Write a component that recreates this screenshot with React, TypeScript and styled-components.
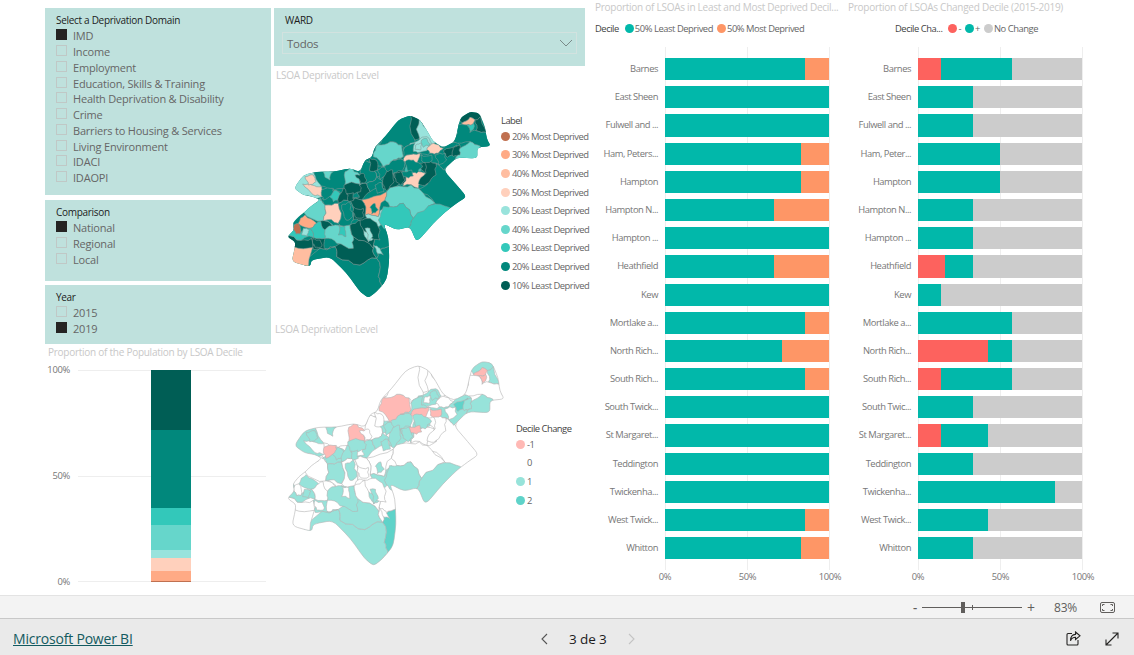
import React from "react";
import styled, { createGlobalStyle } from "styled-components";

const Global = createGlobalStyle`
  html, body { margin: 0; padding: 0; background: #fff; }
  body { font-family: "Open Sans", "Noto Sans", "Liberation Sans", sans-serif; }
`;

const Page = styled.div`
  width: 1134px; height: 655px; overflow: hidden; display: flex; flex-direction: column; background: #fff;
`;
const Canvas = styled.div`
  height: 595px; flex: none; display: grid; grid-template-columns: 226px 314px 263px 270px;
  padding: 8px 0 0 45px; box-sizing: border-box;
`;
const Column = styled.div<{ $ml?: number; $mt?: number }>`
  display: flex; flex-direction: column; min-width: 0; margin-left: ${p => p.$ml ?? 0}px; margin-top: ${p => p.$mt ?? 0}px;
`;
const Panel = styled.section<{ $h: number; $mb?: number }>`
  background: #bfe1dd; height: ${p => p.$h}px; margin-bottom: ${p => p.$mb ?? 0}px;
  padding: 6px 0 0 11px; box-sizing: border-box; flex: none;
`;
const SlicerTitle = styled.div`
  font-size: 10px; line-height: 12px; color: #1c1c1c; letter-spacing: -0.3px; margin-bottom: 2px; white-space: nowrap;
`;
const Option = styled.div`
  height: 15.75px; display: flex; align-items: center; gap: 6px; font-size: 11px; color: #666; letter-spacing: -0.2px; white-space: nowrap;
`;
const Check = styled.span<{ $on?: boolean }>`
  width: 11px; height: 11px; box-sizing: border-box; flex: none; margin-top: -2px;
  background: ${p => (p.$on ? "#252423" : "transparent")};
  border: 1px solid ${p => (p.$on ? "#252423" : "#c0c8c6")};
`;
const Title = styled.div<{ $ml?: number }>`
  font-size: 10px; line-height: 12px; color: #c8c8c8; white-space: nowrap;
  margin-left: ${p => p.$ml ?? 0}px;
  letter-spacing: -0.26px; flex: none;
`;
const WardTitle = styled(SlicerTitle)`margin: 0 0 6px;`;
const Dropdown = styled.div`
  width: 295px; height: 22px; margin-left: -3px; box-sizing: border-box; border: 1px solid #d2e2df;
  display: flex; align-items: center; justify-content: space-between; padding: 0 3px 0 4px;
  font-size: 11.5px; color: #666; letter-spacing: -0.3px;
`;
const MapRow = styled.div<{ $h: number }>`
  height: ${p => p.$h}px; display: flex; flex: none;
`;
const MapSvg = styled.svg`
  flex: none; display: block;
`;
const MapLegend = styled.div<{ $ml: number; $mt: number; $pitch: number }>`
  margin: ${p => p.$mt}px 0 0 ${p => p.$ml}px;
  display: flex; flex-direction: column; font-size: 9.4px; color: #666; white-space: nowrap; letter-spacing: -0.5px;
  & > div { height: ${p => p.$pitch}px; flex: none; }
  & > div:first-child { height: 14px; }
`;
const LegendHead = styled.div`
  display: flex; align-items: center; color: #444;
`;
const LegendItem = styled.div`
  display: flex; align-items: center; gap: 2px;
`;
const Dot = styled.span<{ $c: string; $s?: number }>`
  width: ${p => p.$s ?? 9}px; height: ${p => p.$s ?? 9}px; border-radius: 50%; background: ${p => p.$c}; flex: none;
`;
const StackTitle = styled(Title)`margin: 2px 0 0 3px;`;
const StackChart = styled.div`
  display: flex; margin-top: 12px; height: 228px;
`;
const YAxis = styled.div`
  width: 25px; height: 224px; margin-top: -6px; display: flex; flex-direction: column; justify-content: space-between; align-items: flex-end;
  font-size: 9.4px; line-height: 12px; color: #777; letter-spacing: -0.3px;
`;
const StackPlot = styled.div`
  width: 188px; height: 212px; margin-left: 8px; box-sizing: border-box; padding-right: 2px; display: flex; justify-content: center; align-items: stretch;
  background-image: linear-gradient(#eee, #eee), linear-gradient(#eee, #eee), linear-gradient(#eee, #eee);
  background-size: 100% 1px; background-repeat: no-repeat; background-position: 0 0, 0 50%, 0 100%;
`;
const Stack = styled.div`
  width: 40px; display: flex; flex-direction: column;
`;
const StackSeg = styled.div<{ $c: string }>`background: ${p => p.$c};`;

const ChartHeader = styled.div<{ $ml?: number }>`
  display: flex; align-items: center; height: 14px; margin: 8px 0 0 ${p => p.$ml ?? 0}px; font-size: 9.4px; color: #666; white-space: nowrap; letter-spacing: -0.45px; flex: none;
`;
const LegendName = styled.span`
  color: #444; margin-right: 6px;
`;
const LegendEntry = styled.span`
  display: flex; align-items: center; gap: 1px; margin-right: 4px;
`;
const BarArea = styled.div`
  display: flex; flex-direction: column; margin-top: 12px;
`;
const Rows = styled.div`
  display: flex; flex-direction: column;
`;
const Row = styled.div<{ $edge: boolean }>`
  display: flex; height: ${p => (p.$edge ? 36.2 : 28.2)}px; align-items: stretch; flex: none;
`;
const Cat = styled.div<{ $first: boolean }>`
  width: 70px; padding-right: 7px; padding-top: ${p => (p.$first ? 8 : 0)}px; box-sizing: border-box; text-align: right; font-size: 9.4px; color: #777; line-height: 28px; white-space: nowrap; flex: none; letter-spacing: -0.45px;
`;
const Plot = styled.div<{ $first?: boolean; $last?: boolean }>`
  width: 165px; box-sizing: border-box; display: flex; align-items: stretch; flex: none;
  padding: ${p => (p.$first ? "11px" : "3px")} 1px ${p => (p.$last ? "11px" : "3px")} 0;
  background-image: linear-gradient(#eee, #eee), linear-gradient(#eee, #eee), linear-gradient(#eee, #eee);
  background-size: 1px 100%; background-repeat: no-repeat; background-position: 0 0, 50% 0, 100% 0;
`;
const BarSeg = styled.div<{ $c: string }>`background: ${p => p.$c}; height: 100%;`;
const XAxis = styled.div`
  width: 205px; margin: 1px 0 0 50px; display: flex; justify-content: space-between; font-size: 9.4px; color: #777; line-height: 12px; letter-spacing: -0.3px;
  & > span { width: 40px; text-align: center; }
`;

const ZoomBar = styled.div`
  height: 22px; background: #f3f3f3; border-top: 1px solid #e3e3e3; border-bottom: 1px solid #c8c8c8;
  display: flex; align-items: center; font-size: 12px; color: #605e5c; flex: none;
`;
const ZoomMinus = styled.span`margin-left: 913px; width: 9px; font-size: 13px; line-height: 20px; font-weight: 600;`;
const Slider = styled.div`
  width: 100px; height: 1px; background: #605e5c; position: relative;
`;
const Thumb = styled.span`
  position: absolute; left: 39px; top: -5px; width: 4px; height: 11px; background: #605e5c;
`;
const Tick = styled.span`
  position: absolute; left: 50px; top: -2px; width: 1px; height: 5px; background: #605e5c;
`;
const ZoomPlus = styled.span`margin-left: 5px; font-size: 14px; width: 12px;`;
const ZoomVal = styled.span`margin-left: 15px; width: 26px; font-size: 12px; letter-spacing: -0.2px;`;
const FitBtn = styled.svg`margin-left: 20px;`;
const BottomBar = styled.div`
  flex: 1; background: #eaeaea; display: flex; align-items: center; padding-top: 3px; box-sizing: border-box;
`;
const PbiLink = styled.a`
  margin-left: 13px; font-size: 14px; color: #135a60; text-decoration: underline; width: 527px; letter-spacing: -0.2px; white-space: nowrap; flex: none;
`;
const Pager = styled.div`
  display: flex; align-items: center; width: 110px; font-size: 13.5px; color: #1c1c1c; letter-spacing: -0.1px; flex: none;
`;
const PagerText = styled.span`margin: 0 20px; white-space: nowrap;`;
const BarIcons = styled.div`
  margin-left: 416px; display: flex; align-items: center; gap: 24px;
`;

const C: Record<string, string> = {
  a: "#005e55", b: "#01887c", c: "#33c8ba", d: "#66d6cb", e: "#99e3dc",
  f: "#ffd0bc", g: "#ffbda0", h: "#ffaa85", i: "#c07050",
  p: "#ffb9b5", w: "#ffffff", t: "#97e3da", u: "#5fd3c9",
};

const outline = "52,530 72,510 68,490 85,470 105,455 120,440 150,420 130,410 100,405 72,385 100,345 140,335 190,335 240,325 270,335 285,300 305,292 315,260 345,230 385,180 420,166 450,180 470,210 490,245 520,262 555,245 570,175 600,155 628,160 645,200 650,235 662,258 622,262 622,296 560,292 520,330 560,375 590,410 560,430 530,452 490,490 440,548 420,500 380,510 340,490 355,530 358,600 350,660 320,695 295,714 270,695 230,640 180,590 125,600 120,620 65,605 75,560 75,545";

type Pt = [number, number];
const parse = (s: string): Pt[] => s.split(" ").map(p => p.split(",").map(Number) as Pt);
const lerp = (a: Pt, b: Pt, t: number): string => `${(a[0] + (b[0] - a[0]) * t).toFixed(1)} ${(a[1] + (b[1] - a[1]) * t).toFixed(1)}`;
const rounded = (s: string): string => {
  const pts = parse(s);
  const n = pts.length;
  let d = `M${lerp(pts[n - 1], pts[0], 0.7)}`;
  for (let i = 0; i < n; i++) {
    const a = pts[i];
    const b = pts[(i + 1) % n];
    d += ` Q${a[0]} ${a[1]} ${lerp(a, b, 0.3)} L${lerp(a, b, 0.7)}`;
  }
  return d + "Z";
};
const rnd = (a: number, b: number) => {
  const s = Math.sin(a * 12.9898 + b * 78.233) * 43758.5453;
  return s - Math.floor(s);
};
const subdivide = (a: Pt, b: Pt, depth: number): Pt[] => {
  const len = Math.hypot(b[0] - a[0], b[1] - a[1]);
  if (depth === 0 || len < 9) return [];
  const k = (rnd(a[0] + b[0], a[1] + b[1]) - 0.5) * 0.36;
  const m: Pt = [(a[0] + b[0]) / 2 - ((b[1] - a[1]) * k), (a[1] + b[1]) / 2 + ((b[0] - a[0]) * k)];
  return [...subdivide(a, m, depth - 1), m, ...subdivide(m, b, depth - 1)];
};
const jag = (s: string): string => {
  const pts = parse(s);
  const out: Pt[] = [];
  pts.forEach((a, i) => {
    const b = pts[(i + 1) % pts.length];
    const swap = a[0] > b[0] || (a[0] === b[0] && a[1] > b[1]);
    const mid = swap ? subdivide(b, a, 2).reverse() : subdivide(a, b, 2);
    out.push(a, ...mid);
  });
  return out.map(p => `${p[0].toFixed(1)},${p[1].toFixed(1)}`).join(" ");
};

type Reg = [string, string, string];
const regions: Reg[] = [
  ["100,640 150,565 195,560 200,590 270,615 320,595 325,650 335,680 300,730 250,690 180,600", "b", "t"],
  ["320,595 335,565 370,560 370,640 350,700 335,680 325,650", "b", "u"],
  ["195,560 250,530 310,565 320,595 270,615 200,590", "a", "t"],
  ["310,500 335,480 370,530 370,560 335,565 320,595 310,565 325,520", "b", "w"],
  ["50,620 70,560 128,562 120,635", "g", "w"],
  ["35,525 80,540 125,535 130,562 70,560", "a", "w"],
  ["125,535 165,535 168,570 195,560 150,565 130,568", "a", "t"],
  ["72,495 85,490 90,522 78,522", "i", "w"],
  ["85,490 105,465 140,490 120,505", "h", "t"],
  ["55,480 72,495 78,522 90,522 120,505 130,532 80,540 35,525", "c", "t"],
  ["140,490 165,480 190,500 165,515 165,535 130,532 120,505", "c", "w"],
  ["148,478 180,488 190,503 165,510", "a", "w"],
  ["165,510 195,495 240,495 250,530 250,565 200,550 165,535", "d", "t"],
  ["205,495 225,500 228,530 205,525", "c", "w"],
  ["240,495 270,480 310,500 325,520 310,565 250,530", "a", "w"],
  ["282,505 308,510 312,535 295,545 285,530", "e", "t"],
  ["310,555 330,565 340,585 322,580", "e", "w"],
  ["150,415 100,455 160,482 165,435", "d", "w"],
  ["165,435 205,430 205,490 160,482", "f", "t"],
  ["205,430 240,420 250,480 240,495 205,490", "b", "w"],
  ["150,420 195,390 220,400 205,430 165,435", "b", "t"],
  ["170,400 195,390 215,415 190,425", "c", "t"],
  ["60,385 100,335 130,335 150,370 155,410 130,415 95,410", "e", "t"],
  ["98,372 125,375 155,380 155,410 130,405", "f", "w"],
  ["105,350 130,345 138,365 115,375", "f", "t"],
  ["130,335 240,320 250,360 220,385 195,390 155,378", "b", "w"],
  ["160,335 190,335 180,360 165,352", "d", "t"],
  ["225,335 240,320 270,345 270,375 225,375", "d", "p"],
  ["155,390 190,385 185,405 160,420", "b", "p"],
  ["220,385 270,375 290,370 300,395 275,420 240,420 205,430", "a", "t"],
  ["240,395 262,390 268,412 245,415", "b", "w"],
  ["270,345 285,295 310,310 320,350 290,370 270,375", "b", "w"],
  ["290,370 320,350 345,370 300,395", "b", "t"],
  ["310,310 340,320 370,300 400,300 400,340 370,345 345,350 320,350", "b", "t"],
  ["345,350 370,340 395,370 370,392 338,385", "a", "t"],
  ["370,340 400,335 410,345 400,378 395,370", "a", "t"],
  ["275,420 350,395 345,420 325,470 285,465", "h", "w"],
  ["300,442 315,430 325,450 305,462", "b", "t"],
  ["325,470 345,440 340,490 310,500 285,465", "e", "t"],
  ["240,420 275,420 285,465 310,500 270,480 250,480", "a", "w"],
  ["410,345 445,335 465,338 465,355 445,385 400,378", "f", "w"],
  ["445,385 470,375 500,310 520,325 610,410 530,460 495,430 440,390", "b", "w"],
  ["345,420 350,395 400,380 445,385 495,430 430,475 400,430 360,440", "d", "w"],
  ["340,440 360,440 400,430 430,475 410,510 370,520 335,495 325,480", "c", "t"],
  ["430,475 495,432 550,452 440,570 410,510", "c", "t"],
  ["400,300 410,285 450,280 440,310 410,310", "f", "p"],
  ["410,310 440,310 455,330 430,338 410,345", "c", "t"],
  ["440,310 470,300 500,310 470,375 465,338 455,330", "a", "w"],
  ["280,300 310,255 325,255 345,320 310,310", "b", "w"],
  ["310,290 325,252 360,245 395,255 400,290 370,300 340,320", "d", "p"],
  ["380,170 420,155 435,250 400,270 395,255 360,245 325,255 340,220", "b", "w"],
  ["420,155 458,170 450,235 435,240", "a", "w"],
  ["448,175 480,215 500,245 470,268 450,240", "e", "w"],
  ["420,250 470,230 485,250 470,272 430,275", "e", "t"],
  ["400,270 435,250 430,275 450,280 410,285 400,300 370,300 400,290", "b", "t"],
  ["470,268 490,250 520,265 505,280 480,280", "f", "w"],
  ["450,280 480,280 505,280 520,265 560,245 570,265 560,290 520,330 500,310 470,300", "b", "t"],
  ["560,175 600,145 635,150 635,170 615,180 600,172 575,190", "a", "t"],
  ["575,190 600,172 615,180 610,190 590,195", "g", "p"],
  ["590,195 610,190 610,208 600,218", "c", "p"],
  ["615,180 635,160 650,218 618,212", "a", "t"],
  ["560,190 590,195 600,218 618,212 650,218 675,265 620,262 600,245 550,245", "b", "w"],
  ["555,300 570,265 600,245 630,258 630,305", "d", "t"],
  ["520,272 560,255 556,288 532,292", "a", "u"],
  ["222,375 268,372 272,395 232,405", "a", "t"],
  ["296,290 318,300 322,330 298,332", "a", "w"],
  ["322,330 345,322 352,345 330,358", "b", "t"],
  ["350,335 368,330 372,365 350,392 338,372", "a", "t"],
  ["372,338 392,335 405,360 392,375 378,365", "a", "t"],
  ["405,305 430,300 458,318 440,340 415,335", "b", "t"],
  ["462,305 498,310 498,345 470,372 445,372 468,340", "a", "w"],
  ["250,440 280,445 282,470 255,470", "a", "w"],
  ["270,480 300,475 330,510 330,540 300,530 280,510", "a", "w"],
  ["285,505 300,505 308,530 295,545", "e", "t"],
  ["215,435 238,425 248,470 228,480", "b", "t"],
  ["232,400 250,398 252,420 236,425", "a", "t"],
  ["495,285 525,280 530,300 505,315", "b", "w"],
  ["455,240 470,235 480,255 460,262", "d", "t"],
  ["437,255 455,250 452,270 435,268", "e", "w"],
  ["550,262 570,255 570,285 550,290", "a", "t"],
  ["453,285 485,285 485,303 455,303", "b", "p"],
  ["395,335 425,330 430,348 400,350", "b", "p"],
  ["130,535 150,540 155,560 135,562", "a", "w"],
  ["100,505 118,510 112,528 95,525", "e", "t"],
  ["255,345 280,340 290,360 270,372", "a", "w"],
  ["315,375 335,368 342,395 322,400", "b", "t"],
];

const Map: React.FC<{ mode: 1 | 2; vb: string; w: number; h: number }> = ({ mode, vb, w, h }) => {
  const id = `outline${mode}`;
  const d = rounded(outline);
  const stroke = mode === 1 ? "#7f9a96" : "#b5b5b5";
  return (
    <MapSvg width={w} height={h} viewBox={vb}>
      <defs><clipPath id={id}><path d={d} /></clipPath></defs>
      <g transform={mode === 2 ? "translate(52 135) scale(1.066 1.097) translate(-52 -165)" : undefined}>
        <path d={d} fill={mode === 1 ? C.b : C.w} />
        <g clipPath={`url(#${id})`} stroke={stroke} strokeWidth={1.7} strokeLinejoin="round">
          {regions.map((r, i) => (
            <polygon key={i} points={jag(r[0])} fill={C[mode === 1 ? r[1] : r[2]]} />
          ))}
        </g>
        {mode === 2 && <path d={d} fill="none" stroke={stroke} strokeWidth={1.7} />}
      </g>
    </MapSvg>
  );
};

const domains = ["IMD", "Income", "Employment", "Education, Skills & Training", "Health Deprivation & Disability", "Crime", "Barriers to Housing & Services", "Living Environment", "IDACI", "IDAOPI"];

const labels: [string, string][] = [
  ["20% Most Deprived", C.i], ["30% Most Deprived", C.h], ["40% Most Deprived", C.g], ["50% Most Deprived", C.f],
  ["50% Least Deprived", C.e], ["40% Least Deprived", C.d], ["30% Least Deprived", C.c], ["20% Least Deprived", C.b], ["10% Least Deprived", C.a],
];

const TEAL = "#01b8aa";
const ORANGE = "#fe9666";
const RED = "#fd625e";
const GREY = "#cccccc";

const wards: [string, string, number, number, number][] = [
  ["Barnes", "Barnes", 85.5, 14.3, 42.9],
  ["East Sheen", "East Sheen", 100, 0, 33.3],
  ["Fulwell and ...", "Fulwell and ...", 100, 0, 33.3],
  ["Ham, Peters...", "Ham, Peter...", 83.1, 0, 49.8],
  ["Hampton", "Hampton", 83.1, 0, 49.8],
  ["Hampton N...", "Hampton N...", 66.6, 0, 33.3],
  ["Hampton ...", "Hampton ...", 100, 0, 33.3],
  ["Heathfield", "Heathfield", 66.6, 16.6, 16.7],
  ["Kew", "Kew", 100, 0, 14.2],
  ["Mortlake a...", "Mortlake a...", 85.5, 0, 57.1],
  ["North Rich...", "North Rich...", 71.3, 42.8, 14.3],
  ["South Rich...", "South Rich...", 85.5, 14.3, 42.8],
  ["South Twick...", "South Twic...", 100, 0, 33.3],
  ["St Margaret...", "St Margaret...", 100, 14.3, 28.6],
  ["Teddington", "Teddington", 100, 0, 33.3],
  ["Twickenha...", "Twickenha...", 100, 0, 83.3],
  ["West Twick...", "West Twick...", 85.5, 0, 42.8],
  ["Whitton", "Whitton", 83.1, 0, 33.3],
];

const stack: [string, number][] = [
  [C.a, 60.5], [C.b, 78], [C.c, 17], [C.d, 25], [C.e, 8], [C.f, 13], [C.h, 10], [C.i, 0.9],
];

const Chevron: React.FC<{ dir: "l" | "r"; color: string }> = ({ dir, color }) => (
  <svg width="9" height="14" viewBox="0 0 9 14">
    <path d={dir === "l" ? "M7 2 L2 7 L7 12" : "M2 2 L7 7 L2 12"} fill="none" stroke={color} strokeWidth="1.1" />
  </svg>
);

export default function App() {
  return (
    <Page>
      <Global />
      <Canvas>
        <Column>
          <Panel $h={187} $mb={5}>
            <SlicerTitle>Select a Deprivation Domain</SlicerTitle>
            {domains.map((d, i) => (
              <Option key={d}><Check $on={i === 0} />{d}</Option>
            ))}
          </Panel>
          <Panel $h={81} $mb={4}>
            <SlicerTitle>Comparison</SlicerTitle>
            {["National", "Regional", "Local"].map((d, i) => (
              <Option key={d}><Check $on={i === 0} />{d}</Option>
            ))}
          </Panel>
          <Panel $h={59}>
            <SlicerTitle>Year</SlicerTitle>
            <Option><Check />2015</Option>
            <Option><Check $on />2019</Option>
          </Panel>
          <StackTitle>Proportion of the Population by LSOA Decile</StackTitle>
          <StackChart>
            <YAxis><span>100%</span><span>50%</span><span>0%</span></YAxis>
            <StackPlot>
              <Stack>
                {stack.map(([c, h], i) => <StackSeg key={i} $c={c} style={{ height: h }} />)}
              </Stack>
            </StackPlot>
          </StackChart>
        </Column>

        <Column $ml={3}>
          <Panel $h={58} $mb={3}>
            <WardTitle>WARD</WardTitle>
            <Dropdown>
              <span>Todos</span>
              <svg width="14" height="8" viewBox="0 0 14 8"><path d="M1 1 L7 7 L13 1" fill="none" stroke="#7a8a88" strokeWidth="1" /></svg>
            </Dropdown>
          </Panel>
          <Title $ml={2}>LSOA Deprivation Level</Title>
          <MapRow $h={242}>
            <Map mode={1} vb="12 63 666 726" w={222} h={242} />
            <MapLegend $ml={5} $mt={32} $pitch={18.6}>
              <LegendHead>Label</LegendHead>
              {labels.map(([t, c]) => (
                <LegendItem key={t}><Dot $c={c} />{t}</LegendItem>
              ))}
            </MapLegend>
          </MapRow>
          <Title $ml={1}>LSOA Deprivation Level</Title>
          <MapRow $h={254}>
            <Map mode={2} vb="12 45 714 762" w={238} h={254} />
            <MapLegend $ml={4} $mt={86} $pitch={18.6}>
              <LegendHead>Decile Change</LegendHead>
              <LegendItem><Dot $c={C.p} />-1</LegendItem>
              <LegendItem><Dot $c="transparent" />0</LegendItem>
              <LegendItem><Dot $c={C.t} />1</LegendItem>
              <LegendItem><Dot $c={C.u} />2</LegendItem>
            </MapLegend>
          </MapRow>
        </Column>

        <Column $ml={10} $mt={-7}>
          <Title>Proportion of LSOAs in Least and Most Deprived Decil...</Title>
          <ChartHeader>
            <LegendName>Decile</LegendName>
            <LegendEntry><Dot $c={TEAL} />50% Least Deprived</LegendEntry>
            <LegendEntry><Dot $c={ORANGE} />50% Most Deprived</LegendEntry>
          </ChartHeader>
          <BarArea>
            <Rows>
              {wards.map((w, i) => (
                <Row key={w[0]} $edge={i === 0 || i === wards.length - 1}>
                  <Cat $first={i === 0}>{w[0]}</Cat>
                  <Plot $first={i === 0} $last={i === wards.length - 1}>
                    <BarSeg $c={TEAL} style={{ width: `${w[2]}%` }} />
                    <BarSeg $c={ORANGE} style={{ width: `${100 - w[2]}%` }} />
                  </Plot>
                </Row>
              ))}
            </Rows>
            <XAxis><span>0%</span><span>50%</span><span>100%</span></XAxis>
          </BarArea>
        </Column>

        <Column $mt={-7}>
          <Title>Proportion of LSOAs Changed Decile (2015-2019)</Title>
          <ChartHeader $ml={47}>
            <LegendName>Decile Cha...</LegendName>
            <LegendEntry><Dot $c={RED} />-</LegendEntry>
            <LegendEntry><Dot $c={TEAL} />+</LegendEntry>
            <LegendEntry><Dot $c={GREY} />No Change</LegendEntry>
          </ChartHeader>
          <BarArea>
            <Rows>
              {wards.map((w, i) => (
                <Row key={w[0]} $edge={i === 0 || i === wards.length - 1}>
                  <Cat $first={i === 0}>{w[1]}</Cat>
                  <Plot $first={i === 0} $last={i === wards.length - 1}>
                    {w[3] > 0 && <BarSeg $c={RED} style={{ width: `${w[3]}%` }} />}
                    <BarSeg $c={TEAL} style={{ width: `${w[4]}%` }} />
                    <BarSeg $c={GREY} style={{ width: `${100 - w[3] - w[4]}%` }} />
                  </Plot>
                </Row>
              ))}
            </Rows>
            <XAxis><span>0%</span><span>50%</span><span>100%</span></XAxis>
          </BarArea>
        </Column>
      </Canvas>

      <ZoomBar>
        <ZoomMinus>-</ZoomMinus>
        <Slider><Thumb /><Tick /></Slider>
        <ZoomPlus>+</ZoomPlus>
        <ZoomVal>83%</ZoomVal>
        <FitBtn width="15" height="11" viewBox="0 0 15 11" fill="none" stroke="#605e5c" strokeWidth="1">
          <rect x="0.5" y="0.5" width="14" height="10" rx="1.5" />
          <path d="M2.5 4 V2.5 H4.5 M10.5 2.5 H12.5 V4 M12.5 7 V8.5 H10.5 M4.5 8.5 H2.5 V7" />
        </FitBtn>
      </ZoomBar>
      <BottomBar>
        <PbiLink>Microsoft Power BI</PbiLink>
        <Pager>
          <Chevron dir="l" color="#555" />
          <PagerText>3 de 3</PagerText>
          <Chevron dir="r" color="#c4c4c4" />
        </Pager>
        <BarIcons>
          <svg width="15" height="15" viewBox="0 0 15 15" fill="none" stroke="#252423" strokeWidth="1.1">
            <path d="M6 2.5 H2 a1 1 0 0 0 -1 1 V13 a1 1 0 0 0 1 1 H11 a1 1 0 0 0 1 -1 V9" />
            <path d="M9.5 1 L14 4.8 L9.5 8.5 V6.3 C7 6.3 5.5 7.4 4.5 9.8 C4.5 6.2 6.5 3.6 9.5 3.4 Z" />
          </svg>
          <svg width="14" height="14" viewBox="0 0 14 14" fill="none" stroke="#252423" strokeWidth="1.1">
            <path d="M1 13 L13 1 M7.5 1 H13 V6.5 M1 7.5 V13 H6.5" />
          </svg>
        </BarIcons>
      </BottomBar>
    </Page>
  );
}
